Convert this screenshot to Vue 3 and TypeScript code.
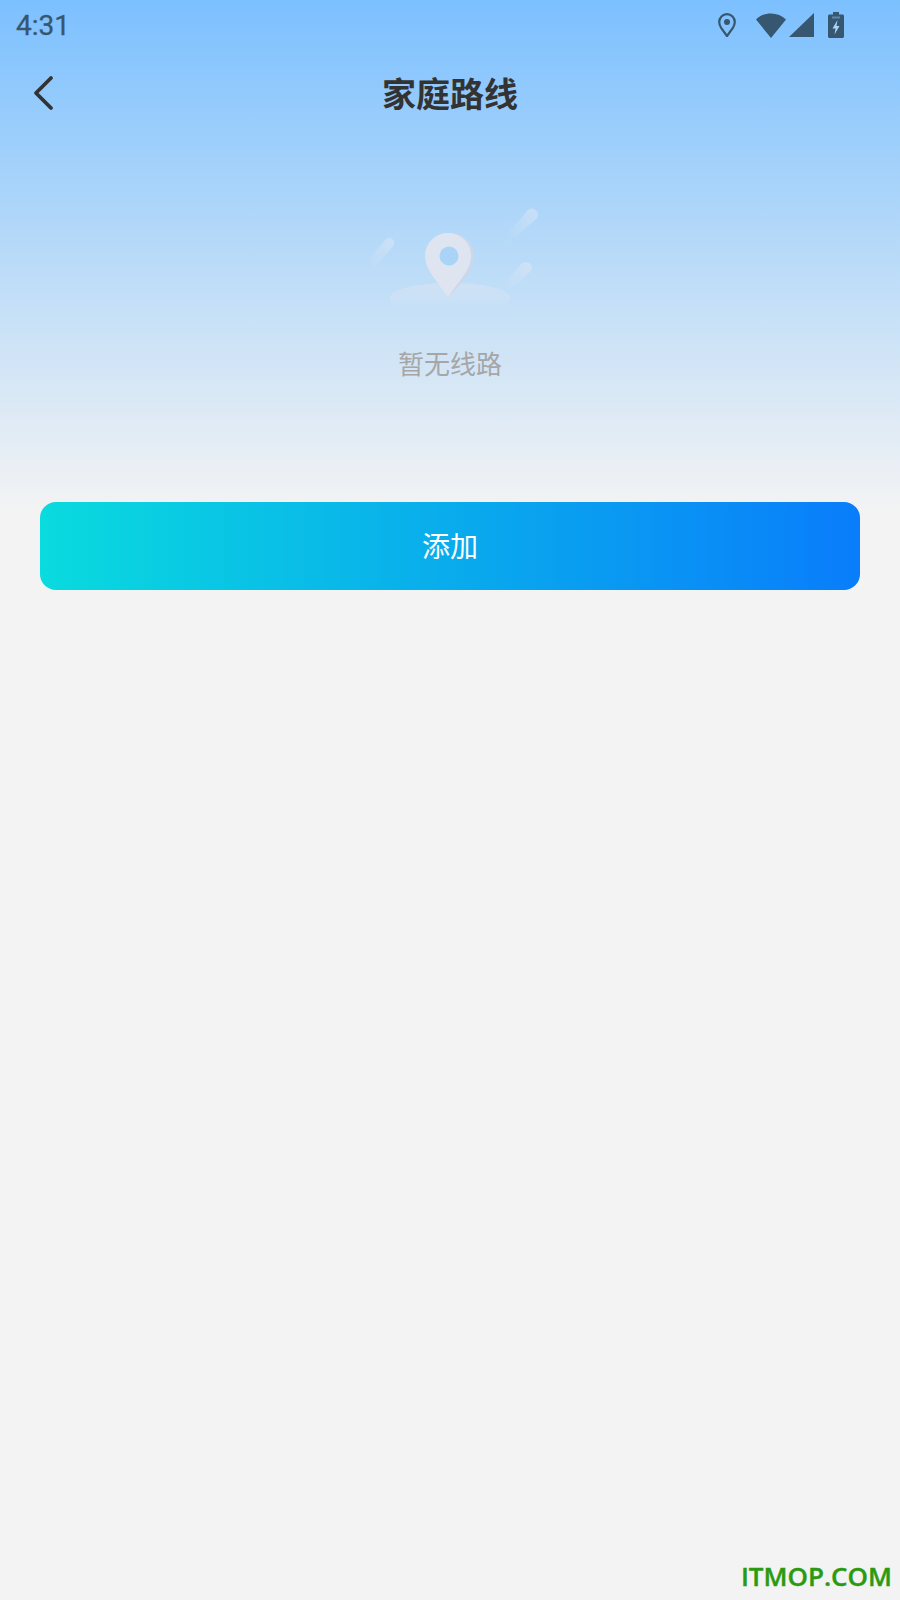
<script setup lang="ts">
const title = '家庭路线'
const emptyText = '暂无线路'
const addText = '添加'
</script>

<template>
  <main class="page">
    <div class="status-bar">
      <span class="time">4:31</span>
      <div class="status-icons">
        <svg class="ic-loc" width="18" height="24" viewBox="0 0 18 24">
          <path d="M9 1.200C4.600 1.200 1.200 4.700 1.200 9c0 2.200.9 4.200 2.100 6.200L9 23l5.700-7.800c1.200-2 2.100-4 2.100-6.200 0-4.300-3.400-7.800-7.800-7.800z" fill="none" stroke="#37566f" stroke-width="2.200" stroke-linejoin="round" />
          <circle cx="9" cy="9" r="3" fill="#37566f" />
        </svg>
        <svg class="ic-wifi" width="30" height="25" viewBox="0 0 30 25">
          <path d="M0 6.500C4 2.500 9.200 .5 15 .5s11 2 15 6L15 25z" fill="#37566f" />
        </svg>
        <svg class="ic-signal" width="25" height="24" viewBox="0 0 25 24">
          <path d="M25 0v24H0z" fill="#37566f" />
        </svg>
        <svg class="ic-bat" width="16" height="26" viewBox="0 0 16 26">
          <path d="M5 0h6v2.500h3.500c.8 0 1.500.7 1.500 1.500v20.500c0 .8-.7 1.500-1.500 1.500h-13C.7 26 0 25.300 0 24.500V4c0-.8.7-1.500 1.500-1.500H5z" fill="#37566f" />
          <path d="M4 4.500h8v2H4z" fill="#8fc5f5" opacity=".45" />
          <path d="M9.500 8L4.500 16.500h3L6.500 22.500 11.500 14h-3z" fill="#a9d3fa" />
        </svg>
      </div>
    </div>

    <header class="nav">
      <svg class="back" width="24" height="36" viewBox="0 0 24 36">
        <path d="M19 3L4 18l15 15" fill="none" stroke="#333" stroke-width="3.800" stroke-linecap="round" stroke-linejoin="round" />
      </svg>
      <h1 class="title">{{ title }}</h1>
    </header>

    <section class="empty">
      <svg class="empty-pic" width="200" height="130" viewBox="0 0 200 130">
        <defs>
          <linearGradient id="streak" x1="1" y1="0" x2="0" y2="1">
            <stop offset="0" stop-color="#dfe6f4" stop-opacity=".6" />
            <stop offset="1" stop-color="#dfe6f4" stop-opacity="0" />
          </linearGradient>
          <linearGradient id="base" x1="0" y1="0" x2="0" y2="1">
            <stop offset="0" stop-color="#d5e1f2" stop-opacity=".75" />
            <stop offset=".7" stop-color="#cfe3f6" stop-opacity=".6" />
            <stop offset="1" stop-color="#cfe3f6" stop-opacity=".1" />
          </linearGradient>
        </defs>
        <path d="M40 108c0-9 27-15 60-15s60 6 60 15c0 4-2 9-6 9H46c-4 0-6-5-6-9z" fill="url(#base)" />
        <path d="M36 49L19 69l5 9 19-22c4-5-3-11-7-7z" fill="url(#streak)" />
        <path d="M178 20L158 43l5 7 24-22c4-5-4-13-9-8z" fill="url(#streak)" />
        <path d="M171 74L155 93l5 7 21-19c4-5-4-12-10-7z" fill="url(#streak)" />
        <path d="M100 43c13 0 24 10.300 24 23 0 8-4 15-9 22l-16 19h2z" fill="#cdd7ea" />
        <path d="M98 43c-12.700 0-23 10.300-23 23 0 8 4 15 9 22l14 19 14-19c5-7 9-14 9-22 0-12.700-10.300-23-23-23z" fill="#dee5f1" />
        <circle cx="99" cy="66" r="9.500" fill="#a9d4f8" />
      </svg>
      <p class="empty-text">{{ emptyText }}</p>
    </section>

    <button class="add-btn" type="button"><span class="add-label">{{ addText }}</span></button>

    <span class="watermark">ITMOP.COM</span>
  </main>
</template>

<style>
html, body {
  margin: 0;
  background: #f3f3f4;
}
</style>

<style scoped>
.page {
  position: relative;
  width: 900px;
  height: 1600px;
  overflow: hidden;
  background: linear-gradient(180deg, #7cc0ff 0, #c3dff7 300px, #f3f3f4 510px);
  font-family: "Noto Sans CJK SC", "Noto Sans", sans-serif;
}

.status-bar {
  height: 50px;
  display: flex;
  align-items: center;
  justify-content: space-between;
  padding: 0 56px 0 16px;
}

.time {
  font-family: Roboto, sans-serif;
  font-size: 28px;
  color: #37566f;
  -webkit-text-stroke: 0.3px #37566f;
}

.status-icons {
  display: flex;
  align-items: center;
}

.ic-wifi {
  margin-left: 20px;
}

.ic-signal {
  margin-left: 3px;
}

.ic-bat {
  margin-left: 14px;
}

.nav {
  height: 84px;
  padding-bottom: 4px;
  position: relative;
  display: flex;
  align-items: center;
  justify-content: center;
}

.back {
  position: absolute;
  left: 32px;
  top: 25px;
}

.title {
  margin: 0;
  font-size: 34px;
  font-weight: 700;
  color: #333;
}

.empty {
  margin-top: 52px;
  display: flex;
  flex-direction: column;
  align-items: center;
}

.empty-pic {
  display: block;
}

.empty-text {
  margin: 23px 0 0;
  font-size: 26px;
  line-height: 40px;
  color: #a6a6a6;
}

.add-btn {
  display: block;
  width: 820px;
  height: 88px;
  margin: 119px 0 0 40px;
  padding: 0 0 3px;
  border: 0;
  border-radius: 16px;
  background: linear-gradient(90deg, #09dbde 0%, #097dfb 100%);
  color: #fff;
  font-family: inherit;
  font-size: 28px;
}

.watermark {
  position: absolute;
  right: 8px;
  bottom: 9px;
  font-family: "Open Sans", sans-serif;
  font-size: 26px;
  font-weight: 600;
  line-height: 30px;
  color: #2a9a10;
  -webkit-text-stroke: 0.4px #2a9a10;
}
</style>
